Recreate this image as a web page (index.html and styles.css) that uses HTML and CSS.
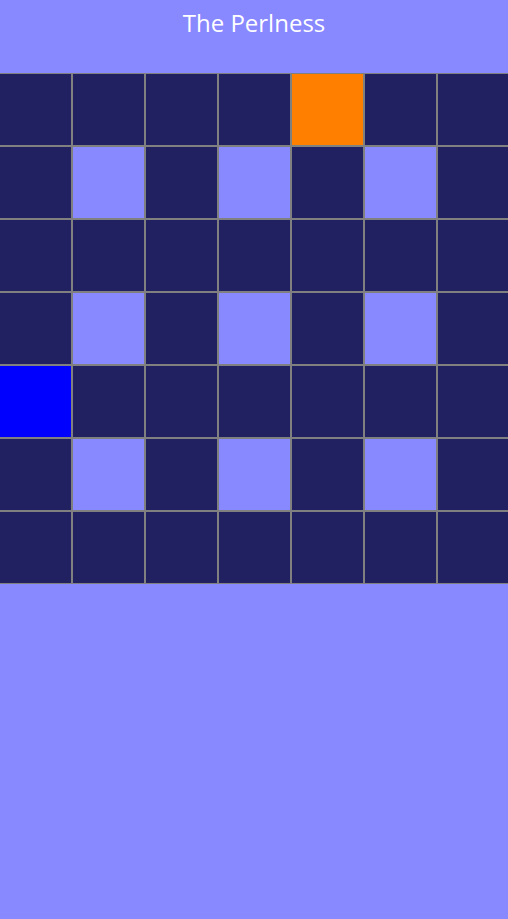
FILE: index.html
```html
<!DOCTYPE html>
<html lang="en">
<head>
  <meta charset="UTF-8" />
  <meta name="viewport" content="width=device-width, initial-scale=1.0"/>
  <title>The Perlness</title>
  <link rel="stylesheet" href="styles.css">
</head>
<body>
  <header class="header">
    <h1>The Perlness</h1>
  </header>

  <div id="board" class="board"></div>

  <script>
    const board = document.getElementById('board');
    const size = 7;
    const player = { row: 4, col: 0 };
    const goal = { row: 0, col: 4 };

    for (let row = 0; row < size; row++) {
      for (let col = 0; col < size; col++) {
        const cell = document.createElement('div');
        cell.className = 'cell';
        if (row % 2 === 1 && col % 2 === 1) {
          cell.classList.add('wall');
        }
        if (row === goal.row && col === goal.col) {
          cell.classList.add('goal');
        }
        if (row === player.row && col === player.col) {
          cell.classList.add('player');
        }
        board.appendChild(cell);
      }
    }
  </script>
</body>
</html>
```

FILE: styles.css
```css
body {
  margin: 0;
  background: #8888ff;
  font-family: 'Open Sans', sans-serif;
  overflow-x: hidden;
}

.header {
  height: 73px;
  text-align: center;
}

.header h1 {
  margin: 0;
  padding-top: 6px;
  font-size: 24px;
  font-weight: normal;
  line-height: 33px;
  color: #fff;
}

.board {
  display: grid;
  grid-template-columns: repeat(7, 73px);
  grid-auto-rows: 73px;
  width: 511px;
  margin-left: -1px;
}

.cell {
  box-sizing: border-box;
  border: 1px solid #808080;
  background: #212162;
}

.cell.wall {
  background: #8888ff;
}

.cell.goal {
  background: #ff8000;
}

.cell.player {
  background: #0000ff;
}
```
